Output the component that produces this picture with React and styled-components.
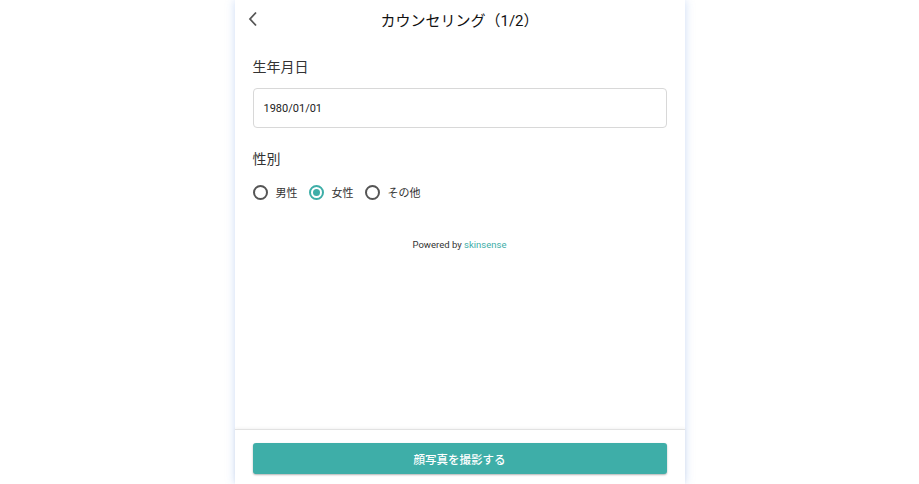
import React, { useState } from 'react';
import styled, { createGlobalStyle } from 'styled-components';

const teal = '#3eaea8';
const fontStack = '"Roboto", "Noto Sans CJK JP", sans-serif';

const GlobalStyle = createGlobalStyle`
  html, body {
    margin: 0;
    padding: 0;
    background: #fff;
    font-family: ${fontStack};
    color: #222;
  }
`;

const Page = styled.div`
  display: flex;
  justify-content: center;
  height: 484px;
  overflow: hidden;
`;

const Panel = styled.div`
  width: 450px;
  height: 100%;
  display: flex;
  flex-direction: column;
  background: #fff;
  box-shadow: 0 0 9px rgba(110, 155, 230, 0.35);
`;

const Header = styled.header`
  height: 38px;
  display: grid;
  grid-template-columns: 40px 1fr 40px;
  align-items: center;
`;

const BackButton = styled.button`
  border: none;
  background: none;
  padding: 0 0 0 12px;
  height: 100%;
  display: flex;
  align-items: center;
  cursor: pointer;
`;

const Title = styled.h1`
  margin: 0;
  text-align: center;
  font-size: 15px;
  font-weight: 400;
  color: #111;
`;

const Content = styled.main`
  flex: 1;
  padding: 20px 18px 0;
  display: flex;
  flex-direction: column;
`;

const Label = styled.div`
  font-size: 14px;
  color: #333;
  line-height: 18px;
  margin-bottom: ${p => p.gap || 12}px;
`;

const TextField = styled.div`
  height: 40px;
  box-sizing: border-box;
  border: 1px solid #d8d8d8;
  border-radius: 4px;
  padding: 0 10px;
  display: flex;
  align-items: center;
  font-size: 11px;
  color: #222;
  margin-bottom: 22px;
`;

const RadioGroup = styled.div`
  display: flex;
  align-items: center;
  gap: 11px;
  height: 20px;
`;

const RadioItem = styled.label`
  display: flex;
  align-items: center;
  gap: 8px;
  font-size: 11px;
  color: #333;
  cursor: pointer;
`;

const Circle = styled.span`
  width: 15px;
  height: 15px;
  box-sizing: border-box;
  border-radius: 50%;
  border: 2px solid ${p => (p.checked ? teal : '#555')};
  display: flex;
  align-items: center;
  justify-content: center;
  &::after {
    content: '';
    width: 7px;
    height: 7px;
    border-radius: 50%;
    background: ${p => (p.checked ? teal : 'transparent')};
  }
`;

const Powered = styled.div`
  margin-top: 37px;
  text-align: center;
  font-size: 9.5px;
  color: #333;
  span {
    color: ${teal};
  }
`;

const Footer = styled.footer`
  height: 55px;
  box-sizing: border-box;
  padding: 13px 18px 0;
  border-top: 1px solid #e2e2e2;
  box-shadow: 0 -1px 3px rgba(0, 0, 0, 0.05);
`;

const PrimaryButton = styled.button`
  width: 100%;
  height: 31px;
  border: none;
  border-radius: 3px;
  background: ${teal};
  color: #fff;
  font-family: ${fontStack};
  font-size: 11.5px;
  font-weight: 500;
  box-shadow: 0 1px 2px rgba(0, 0, 0, 0.3);
  cursor: pointer;
`;

const genders = ['男性', '女性', 'その他'];

export default function App() {
  const [gender, setGender] = useState('女性');

  return (
    <>
      <GlobalStyle />
      <Page>
        <Panel>
          <Header>
            <BackButton aria-label="back">
              <svg width="12" height="16" viewBox="0 0 12 16">
                <path d="M9 1.5 L3 8 L9 14.5" fill="none" stroke="#555" strokeWidth="1.8" />
              </svg>
            </BackButton>
            <Title>カウンセリング（1/2）</Title>
            <div />
          </Header>
          <Content>
            <Label>生年月日</Label>
            <TextField>1980/01/01</TextField>
            <Label gap={14}>性別</Label>
            <RadioGroup>
              {genders.map(g => (
                <RadioItem key={g} onClick={() => setGender(g)}>
                  <Circle checked={gender === g} />
                  {g}
                </RadioItem>
              ))}
            </RadioGroup>
            <Powered>
              Powered by <span>skinsense</span>
            </Powered>
          </Content>
          <Footer>
            <PrimaryButton>顔写真を撮影する</PrimaryButton>
          </Footer>
        </Panel>
      </Page>
    </>
  );
}
